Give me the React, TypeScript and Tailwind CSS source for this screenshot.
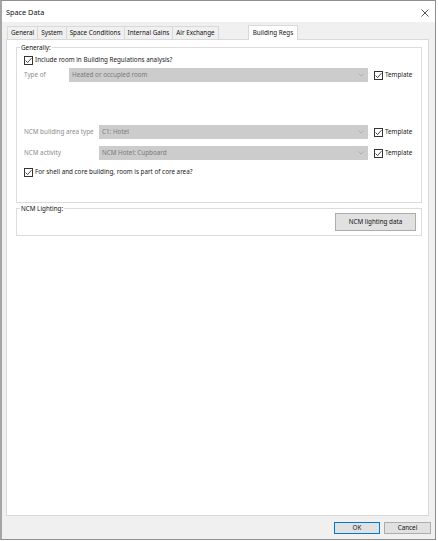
import React from "react";

const font = { fontFamily: '"Segoe UI", "Noto Sans", "Open Sans", sans-serif' };

function Check({ label, muted }: { label: string; muted?: boolean }) {
  return (
    <div className="flex items-center gap-[2px] h-[9px]">
      <div className="w-[9px] h-[9px] border border-[#333] bg-white flex items-center justify-center shrink-0">
        <svg width="7" height="7" viewBox="0 0 7 7">
          <path d="M0.6 3.6 L2.6 5.6 L6.4 1.2" fill="none" stroke="#333" strokeWidth="0.9" />
        </svg>
      </div>
      <span className={muted ? "text-[#8c8c8c]" : "text-[#1a1a1a]"}>{label}</span>
    </div>
  );
}

function Combo({ value, className }: { value: string; className: string }) {
  return (
    <div className={`h-[14px] bg-[#cccccc] flex items-center justify-between pl-[3px] pr-[4px] ${className}`}>
      <span className="text-[#7a7a7a]">{value}</span>
      <svg width="6" height="4" viewBox="0 0 6 4">
        <path d="M0.5 0.5 L3 3 L5.5 0.5" fill="none" stroke="#a8a8a8" strokeWidth="0.8" />
      </svg>
    </div>
  );
}

const tabs = ["General", "System", "Space Conditions", "Internal Gains", "Air Exchange"];

export default function App() {
  return (
    <div className="w-[438px] h-[541px] bg-white text-[6.3px] leading-none" style={font}>
      <div className="w-[436px] h-[540px] border border-[#8f8f8f] border-l-2 border-l-[#a5a5a5] bg-[#f0f0f0] flex flex-col">
        {/* title bar */}
        <div className="h-[21px] bg-white flex items-center justify-between pl-[4px] pr-[6px] shrink-0">
          <span className="text-[7.3px] text-[#111] mt-[3px]">Space Data</span>
          <svg width="8" height="8" viewBox="0 0 8 8" className="mt-[2px]">
            <path d="M0.5 0.5 L7.5 7.5 M7.5 0.5 L0.5 7.5" stroke="#444" strokeWidth="0.9" />
          </svg>
        </div>
        {/* tabs */}
        <div className="flex items-end pl-[5px] h-[17px] shrink-0">
          {tabs.map((t) => (
            <div
              key={t}
              className="h-[13px] px-[3px] border border-b-0 border-[#d9d9d9] -ml-px first:ml-0 flex items-center bg-[#f0f0f0] text-[#111]"
            >
              {t}
            </div>
          ))}
          <div className="h-[15px] px-[4px] ml-[29px] border border-b-0 border-[#d9d9d9] flex items-center bg-white text-[#111] relative top-px z-10">
            Building Regs
          </div>
        </div>
        {/* panel */}
        <div className="ml-[4px] w-[423px] h-[477px] border border-[#d9d9d9] bg-white pl-[9px] shrink-0">
          {/* Generally group */}
          <div className="relative border border-[#dcdcdc] w-[406px] h-[156px] mt-[7px]">
            <span className="absolute -top-[3px] left-[3px] bg-white px-[1px] text-[#111]">Generally:</span>
            <div className="pl-[7px] mt-[8px]">
              <Check label="Include room in Building Regulations analysis?" />
            </div>
            <div className="flex items-center pl-[7px] mt-[3px]">
              <span className="w-[45px] text-[#8c8c8c]">Type of</span>
              <Combo value="Heated or occupied room" className="w-[299px]" />
              <div className="ml-[6px]">
                <Check label="Template" />
              </div>
            </div>
            <div className="flex items-center pl-[7px] mt-[43px]">
              <span className="w-[75px] text-[#8c8c8c]">NCM building area type</span>
              <Combo value="C1: Hotel" className="w-[269px]" />
              <div className="ml-[6px]">
                <Check label="Template" />
              </div>
            </div>
            <div className="flex items-center pl-[7px] mt-[7px]">
              <span className="w-[75px] text-[#8c8c8c]">NCM activity</span>
              <Combo value="NCM Hotel: Cupboard" className="w-[269px]" />
              <div className="ml-[6px]">
                <Check label="Template" />
              </div>
            </div>
            <div className="pl-[7px] mt-[8px]">
              <Check label="For shell and core building, room is part of core area?" />
            </div>
          </div>
          {/* NCM Lighting group */}
          <div className="relative border border-[#dcdcdc] w-[406px] h-[28px] mt-[5px] flex justify-end pr-[5px] pt-[4px]">
            <span className="absolute -top-[3px] left-[3px] bg-white px-[1px] text-[#111]">NCM Lighting:</span>
            <div className="w-[81px] h-[18px] bg-[#e1e1e1] border border-[#adadad] flex items-center justify-center text-[#111]">
              NCM lighting data
            </div>
          </div>
        </div>
        {/* buttons */}
        <div className="flex justify-end gap-[4px] pr-[4px] mt-[6px]">
          <div className="w-[46px] h-[12px] bg-[#e1e1e1] border border-[#0078d7] flex items-center justify-center text-[#111]">
            OK
          </div>
          <div className="w-[47px] h-[12px] bg-[#e1e1e1] border border-[#adadad] flex items-center justify-center text-[#111]">
            Cancel
          </div>
        </div>
      </div>
    </div>
  );
}
